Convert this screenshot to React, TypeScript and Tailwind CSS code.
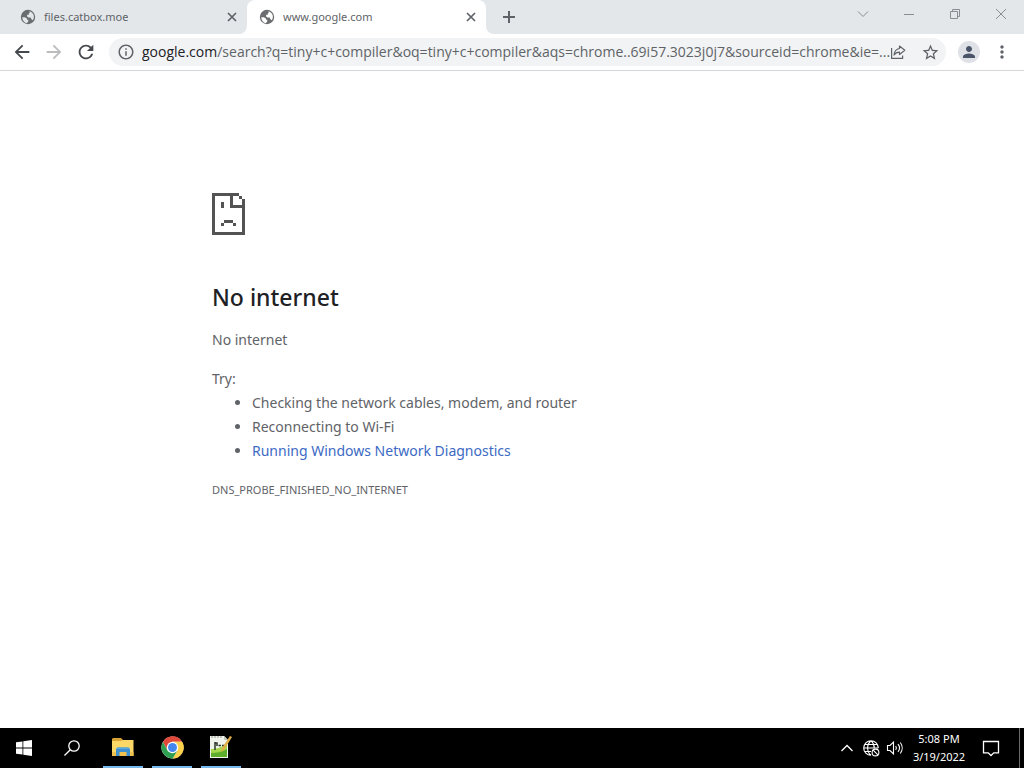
import React, { useState } from 'react';
import {
  MdArrowBack,
  MdArrowForward,
  MdMoreVert,
  MdOutlineInfo,
  MdPerson,
  MdRefresh,
  MdStarBorder,
} from 'react-icons/md';

const HOST = 'google.com';
const PATH =
  '/search?q=tiny+c+compiler&oq=tiny+c+compiler&aqs=chrome..69i57.3023j0j7&sourceid=chrome&ie=...';

const tabs = [
  { id: 'catbox', title: 'files.catbox.moe' },
  { id: 'google', title: 'www.google.com' },
];

const suggestions = ['Checking the network cables, modem, and router', 'Reconnecting to Wi-Fi'];

// Bottom corners where the active tab flows into the toolbar
const TabFlare: React.FC<{ className: string }> = ({ className }) => (
  <svg viewBox="0 0 8 8" className={`absolute bottom-0 size-2 fill-white ${className}`}>
    <path d="M8 0v8H0a8 8 0 0 0 8-8z" />
  </svg>
);

const GlobeIcon: React.FC<{ land: string }> = ({ land }) => (
  <svg viewBox="0 0 16 16" className="size-4 shrink-0">
    <circle cx="8" cy="8" r="7.2" fill="#6a6c6f" />
    <path
      d="M2.300 8.200h2.500l2.200 1.300v1.300h1.300v1.500l-1.500 1.900C4 13.500 2.200 11.200 2.300 8.200zM9.200 2.300c2.800.5 4.700 2.800 4.700 5.500 0 1.400-.4 2.500-1.100 3.500l-1.300-1-1-1.800H8.300L7 7.200l.2-1.400h1.600V4.500l1-.7z"
      fill={land}
    />
  </svg>
);

const TabStrip: React.FC = () => {
  const [activeId, setActiveId] = useState('google');

  return (
    <div className="flex h-[34px] bg-[#e3e7ea] text-[#5f6368]">
      <div role="tablist" className="flex pl-2">
        {tabs.map((tab) => {
          const active = tab.id === activeId;
          return (
            <div
              key={tab.id}
              className={`relative flex w-[239px] items-center pr-[7px] pl-3 ${active ? 'rounded-t-lg bg-white' : ''}`}
            >
              {active && (
                <>
                  <TabFlare className="-left-2" />
                  <TabFlare className="-right-2 -scale-x-100" />
                </>
              )}
              <button
                role="tab"
                aria-selected={active}
                onClick={() => setActiveId(tab.id)}
                className="flex min-w-0 flex-1 items-center gap-2 text-left text-[11px]"
              >
                <GlobeIcon land={active ? '#ffffff' : '#e3e7ea'} />
                <span className="truncate">{tab.title}</span>
              </button>
              <button aria-label={`Close ${tab.title}`} className="flex size-4 items-center justify-center">
                <svg viewBox="0 0 10 10" className="size-2.5 fill-none stroke-current" strokeWidth="1.700">
                  <path d="M1 1l8 8M9 1L1 9" />
                </svg>
              </button>
            </div>
          );
        })}
      </div>
      <button aria-label="New tab" className="flex w-[46px] items-center justify-center">
        <svg viewBox="0 0 12 12" className="size-3 fill-none stroke-current" strokeWidth="2">
          <path d="M6 0v12M0 6h12" />
        </svg>
      </button>
      <WindowControls />
    </div>
  );
};

const WindowControls: React.FC = () => {
  const controls = [
    { label: 'Search tabs', d: 'M1 3.5l5 5 5-5' },
    { label: 'Minimize', d: 'M1 6.5h10' },
    { label: 'Restore', d: 'M1.5 3.5h7v7h-7zM3.5 3.5v-2h7v7h-2' },
    { label: 'Close window', d: 'M1 1l10 10M11 1L1 11' },
  ];

  return (
    <div className="ml-auto flex h-7">
      {controls.map((control) => (
        <button key={control.label} aria-label={control.label} className="flex w-[46px] items-center justify-center">
          <svg viewBox="0 0 12 12" className="size-3 fill-none stroke-[#8a8e92]" strokeWidth="1">
            <path d={control.d} />
          </svg>
        </button>
      ))}
    </div>
  );
};

const ShareIcon: React.FC = () => (
  <svg viewBox="0 0 16 16" className="size-4 fill-none stroke-current" strokeWidth="1.2">
    <path d="M1.600 4v10.300h11v-2.800" />
    <path d="M9.500 2l5.300 4.300-5.300 4.200V8.200C7 8.200 5.300 9 4 11c.4-3.600 2.300-6 5.500-6.500z" strokeLinejoin="round" />
  </svg>
);

const AddressBar: React.FC = () => {
  const [focused, setFocused] = useState(false);
  const [url, setUrl] = useState(`https://www.${HOST}${PATH}`);

  return (
    <div className="flex h-7 min-w-0 flex-1 items-center rounded-full bg-[#f1f3f4]">
      <button aria-label="View site information" className="flex w-[33px] items-center justify-center">
        <MdOutlineInfo size={18} />
      </button>
      <div className="relative min-w-0 flex-1 font-['Open_Sans',sans-serif] text-sm">
        <input
          aria-label="Address and search bar"
          value={focused ? url : ''}
          onChange={(e) => setUrl(e.target.value)}
          onFocus={() => setFocused(true)}
          onBlur={() => setFocused(false)}
          className="block w-full bg-transparent text-[#202124] outline-none"
        />
        {/* While the box is idle the host stands out from the rest of the address */}
        {!focused && (
          <div className="pointer-events-none absolute inset-0 overflow-hidden whitespace-nowrap">
            <span className="text-[#202124]">{HOST}</span>
            {PATH}
          </div>
        )}
      </div>
      <button aria-label="Share this page" className="mr-2 flex w-4 items-center justify-center">
        <ShareIcon />
      </button>
      <button aria-label="Bookmark this tab" className="flex w-8 items-center justify-center">
        <MdStarBorder size={19} />
      </button>
    </div>
  );
};

const Toolbar: React.FC = () => (
  <div className="flex h-[37px] items-center border-b border-[#d5d7da] bg-white px-1.5 text-[#5f6368]">
    <button aria-label="Back" className="flex w-8 items-center justify-center text-[#45494d]">
      <MdArrowBack size={22} />
    </button>
    <button aria-label="Forward" disabled className="flex w-8 items-center justify-center text-[#babcbe]">
      <MdArrowForward size={22} />
    </button>
    <button aria-label="Reload" className="mr-[7px] flex w-8 items-center justify-center text-[#45494d]">
      <MdRefresh size={22} />
    </button>
    <AddressBar />
    <button aria-label="Profile" className="mr-1.5 ml-3 flex size-[22px] items-center justify-center rounded-full bg-[#dee1e6]">
      <MdPerson size={18} className="text-[#4a5468]" />
    </button>
    <button aria-label="Customize and control" className="flex w-8 items-center justify-center">
      <MdMoreVert size={20} />
    </button>
  </div>
);

const SadPageIcon: React.FC = () => (
  <svg viewBox="0 0 11 14" className="h-[42px] w-[33px] fill-[#535353]" shapeRendering="crispEdges">
    <path d="M0 0h9v1H7v3h3V2h1v12H0zM1 1v12h9V5H6V1z" fillRule="evenodd" />
    <path d="M9 1h1v1H9zM3 3h1v2H3zM4 9h3v1H4zM3 10h1v1H3zM7 10h1v1H7z" />
  </svg>
);

const ErrorPage: React.FC = () => (
  <main className="flex-1 bg-white">
    <div className="mx-auto max-w-[600px] pt-[122px] text-sm leading-6 text-[#5f6368]">
      <SadPageIcon />
      <h1 className="mt-12 text-[23px] leading-7 font-medium text-[#202124]">No internet</h1>
      <p className="mt-[17px]">No internet</p>
      <p className="mt-[15px]">Try:</p>
      <ul className="list-disc pl-10">
        {suggestions.map((text) => (
          <li key={text}>{text}</li>
        ))}
        <li>
          <a href="#diagnostics" className="text-[#3c6ac4]">
            Running Windows Network Diagnostics
          </a>
        </li>
      </ul>
      <p className="mt-[15px] text-[11px]">DNS_PROBE_FINISHED_NO_INTERNET</p>
    </div>
  </main>
);

const FolderIcon: React.FC = () => (
  <svg viewBox="0 0 22 20" className="h-5 w-[22px]">
    <path d="M0 2l1-1h8l2 2v3H0z" fill="#d9a334" />
    <path d="M0 4h9l2-1h10.500v16H0z" fill="#fbd767" />
    <path d="M0 15h21.500v4H0z" fill="#f0c14e" />
    <path d="M4 19v-7l1.500-1.500h11L18 12v7h-3.500v-4h-7v4z" fill="#3f90cf" />
    <path d="M4 12l1.500-1.500h11L18 12z" fill="#5aa9e0" />
  </svg>
);

const ChromeIcon: React.FC = () => (
  <svg viewBox="0 0 48 48" className="size-[23px]">
    <circle cx="24" cy="24" r="23" fill="#fff" />
    <path d="M24 12h20A23 23 0 0 0 4.100 12.500L13.600 30z" fill="#e0483a" />
    <path d="M34.400 30L24.400 47A23 23 0 0 0 44 12H24z" fill="#fcd04b" />
    <path d="M13.600 30L4.100 12.500A23 23 0 0 0 24.400 47l10-17z" fill="#2fa050" />
    <circle cx="24" cy="24" r="12" fill="#fff" />
    <circle cx="24" cy="24" r="9.300" fill="#4587ee" />
  </svg>
);

const NotepadIcon: React.FC = () => (
  <svg viewBox="0 0 22 24" className="h-6 w-[22px]">
    <path d="M0 1h14l4 4v18H0z" fill="#f0f2ec" />
    <path d="M14 1l4 4h-4z" fill="#c3c8bd" />
    <path d="M1 14c5 0 9-1 16-5v13H1z" fill="#a5d84c" />
    <path d="M1 18c6 0 10-1 16-4v8H1z" fill="#5fae2b" />
    <path d="M2 1v2M5 1v2M8 1v2M11 1v2" stroke="#8f968a" />
    <path d="M5 7v8M5 8h2v3M8.500 10.500h2.500M12 10.500h2.500" stroke="#2b3a26" strokeWidth="1.500" fill="none" />
    <path d="M20 1l2 1-8 13-3 2 1-4z" fill="#dfae45" />
  </svg>
);

const taskbarApps = [
  { label: 'File Explorer', icon: <FolderIcon /> },
  { label: 'Google Chrome', icon: <ChromeIcon /> },
  { label: 'Notepad++', icon: <NotepadIcon /> },
];

const Taskbar: React.FC = () => (
  <footer className="flex h-10 bg-black text-white">
    <button aria-label="Start" className="flex w-12 items-center justify-center">
      <svg viewBox="0 0 16 16" className="size-4 fill-white">
        <path d="M0 2.300L6.500 1.400v6.200H0zM7.300 1.300L16 0v7.600H7.300zM0 8.400h6.500v6.200L0 13.700zM7.300 8.400H16V16l-8.700-1.300z" />
      </svg>
    </button>
    <button aria-label="Search" className="flex w-12 items-center justify-center">
      <svg viewBox="0 0 16 16" className="size-4 fill-none stroke-white" strokeWidth="1.300">
        <circle cx="10" cy="6" r="5.200" />
        <path d="M6.300 9.700L.5 15.500" />
      </svg>
    </button>
    <div className="flex gap-[9px] pl-[7px]">
      {taskbarApps.map((app) => (
        <button
          key={app.label}
          aria-label={app.label}
          className="flex w-10 items-center justify-center border-b-2 border-[#76b9ed]"
        >
          {app.icon}
        </button>
      ))}
    </div>
    <div className="ml-auto flex items-center">
      <button aria-label="Show hidden icons" className="flex w-6 items-center justify-center">
        <svg viewBox="0 0 14 14" className="size-3.5 fill-none stroke-white" strokeWidth="1.300">
          <path d="M1.500 10L7 4.500l5.500 5.500" />
        </svg>
      </button>
      <button aria-label="No internet access" className="flex w-6 items-center justify-center">
        <svg viewBox="0 0 18 18" className="size-[18px] fill-none stroke-white" strokeWidth="1.100">
          <path d="M9 16.300A7.300 7.300 0 1 1 16.300 9M9 16.300c-4.500-3.500-4.500-11 0-14.600 2.200 2 3.300 4.500 3.300 7.300M1.700 9h14.600M2.600 5.500h12.800M2.600 12.500H9" />
          <circle cx="13.500" cy="13.500" r="3.400" className="fill-black" />
          <path d="M11.200 11.200l4.600 4.600" />
        </svg>
      </button>
      <button aria-label="Volume" className="flex w-6 items-center justify-center">
        <svg viewBox="0 0 18 18" className="size-[18px] fill-none stroke-white" strokeWidth="1.100">
          <path d="M1.500 6.500H4L7.500 3v12L4 11.500H1.500z" />
          <path d="M9.700 7a3.500 3.500 0 0 1 0 4M12 5.200a6 6 0 0 1 0 7.600M14.300 3.500a9 9 0 0 1 0 11" />
        </svg>
      </button>
      <button className="w-16 text-[11px] leading-[18px]">
        <span className="block">5:08 PM</span>
        <span className="block">3/19/2022</span>
      </button>
      <button aria-label="Notifications" className="flex w-10 items-center justify-center">
        <svg viewBox="0 0 18 18" className="size-[18px] fill-none stroke-white" strokeWidth="1.300">
          <path d="M1.500 2.500h15v11.300h-4.700L9 16.500l-2.800-2.700H1.500z" />
        </svg>
      </button>
      <button aria-label="Show desktop" className="ml-2 h-10 w-[5px] border-l border-[#6b6b6b]" />
    </div>
  </footer>
);

const App: React.FC = () => {
  return (
    <div className="flex min-h-screen flex-col bg-white font-['Noto_Sans','Open_Sans',sans-serif]">
      <header>
        <TabStrip />
        <Toolbar />
      </header>
      <ErrorPage />
      <Taskbar />
    </div>
  );
};

export default App;
